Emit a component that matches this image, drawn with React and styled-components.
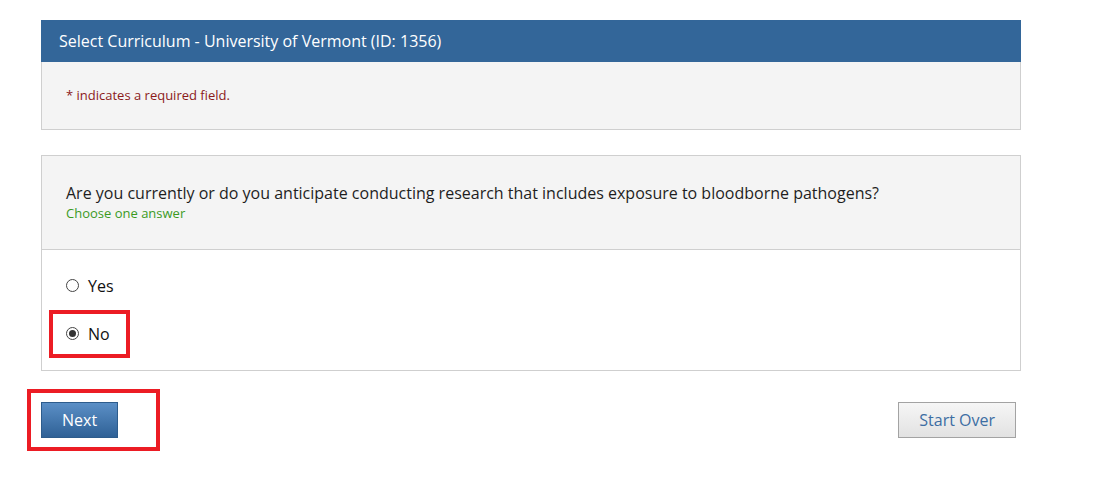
import React, { useState } from 'react';
import styled, { createGlobalStyle } from 'styled-components';

const GlobalStyle = createGlobalStyle`
  body {
    margin: 0;
    background: #ffffff;
    font-family: "Open Sans", "Noto Sans", Arial, sans-serif;
    color: #222;
  }
`;

const Page = styled.div`
  width: 980px;
  min-height: 100vh;
  padding: 20px 0 0 41px;
  box-sizing: content-box;
`;

const Panel = styled.div`
  border: 1px solid #cfcfcf;
  margin-bottom: ${(p) => p.$gap || 0}px;
`;

const PanelHeader = styled.div`
  background: #336699;
  color: #ffffff;
  font-size: 16px;
  height: 42px;
  margin: -1px -1px 0;
  display: flex;
  align-items: center;
  padding-left: 18px;
`;

const PanelBody = styled.div`
  background: ${(p) => (p.$white ? '#ffffff' : '#f4f4f4')};
  padding: ${(p) => p.$pad};
  border-top: ${(p) => (p.$divider ? '1px solid #cfcfcf' : 'none')};
`;

const Required = styled.div`
  font-size: 13px;
  color: #8b1a1a;
  line-height: 16px;
`;

const Question = styled.div`
  font-size: 16px;
  color: #1e1e1e;
  line-height: 22px;
`;

const Hint = styled.div`
  font-size: 13px;
  color: #3b9a1f;
  line-height: 18px;
`;

const Options = styled.div`
  display: flex;
  flex-direction: column;
  gap: 23px;
`;

const Highlight = styled.div`
  position: relative;
  display: flex;
  align-self: flex-start;

  &::after {
    content: '';
    position: absolute;
    top: ${(p) => p.$t}px;
    left: ${(p) => p.$l}px;
    right: ${(p) => p.$r}px;
    bottom: ${(p) => p.$b}px;
    border: 4px solid #ec1c24;
    pointer-events: none;
  }
`;

const OptionLabel = styled.label`
  display: flex;
  align-items: center;
  gap: 9px;
  font-size: 16px;
  color: #111;
  height: 25px;
  cursor: pointer;
`;

const RadioCircle = styled.span`
  width: 13px;
  height: 13px;
  border-radius: 50%;
  border: 1px solid #444;
  background: #fff;
  display: flex;
  align-items: center;
  justify-content: center;
  box-sizing: border-box;

  &::after {
    content: '';
    display: ${(p) => (p.$checked ? 'block' : 'none')};
    width: 7px;
    height: 7px;
    border-radius: 50%;
    background: #333;
  }
`;

const Actions = styled.div`
  display: flex;
  justify-content: space-between;
  align-items: flex-start;
  padding: 31px 5px 0 0;
`;

const Button = styled.button`
  font-family: "Open Sans", "Noto Sans", Arial, sans-serif;
  font-size: 16px;
  height: 36px;
  padding: 0 20px;
  border: 1px solid ${(p) => (p.$primary ? '#2d5c8c' : '#a3a3a3')};
  color: ${(p) => (p.$primary ? '#ffffff' : '#3d6ea3')};
  background: ${(p) =>
    p.$primary
      ? 'linear-gradient(#5b8fc6, #2f6196)'
      : 'linear-gradient(#f6f6f6, #e2e2e2)'};
  border-radius: 0;
  cursor: pointer;
`;

const options = ['Yes', 'No'];

const App = () => {
  const [answer, setAnswer] = useState('No');

  return (
    <Page>
      <GlobalStyle />
      <Panel $gap={25}>
        <PanelHeader>Select Curriculum - University of Vermont (ID: 1356)</PanelHeader>
        <PanelBody $pad="25px 24px 26px 24px">
          <Required>* indicates a required field.</Required>
        </PanelBody>
      </Panel>

      <Panel>
        <PanelBody $pad="26px 24px 27px 24px">
          <Question>
            Are you currently or do you anticipate conducting research that includes exposure to bloodborne pathogens?
          </Question>
          <Hint>Choose one answer</Hint>
        </PanelBody>
        <PanelBody $white $divider $pad="23px 24px 24px 24px">
          <Options>
            {options.map((o) => {
              const row = (
                <OptionLabel key={o} onClick={() => setAnswer(o)}>
                  <RadioCircle $checked={answer === o} />
                  {o}
                </OptionLabel>
              );
              return o === 'No' ? (
                <Highlight key={o} $t={-11} $l={-17} $r={-20} $b={-12}>
                  {row}
                </Highlight>
              ) : (
                row
              );
            })}
          </Options>
        </PanelBody>
      </Panel>

      <Actions>
        <Highlight $t={-13} $l={-14} $r={-42} $b={-13}>
          <Button $primary>Next</Button>
        </Highlight>
        <Button>Start Over</Button>
      </Actions>
    </Page>
  );
};

export default App;
